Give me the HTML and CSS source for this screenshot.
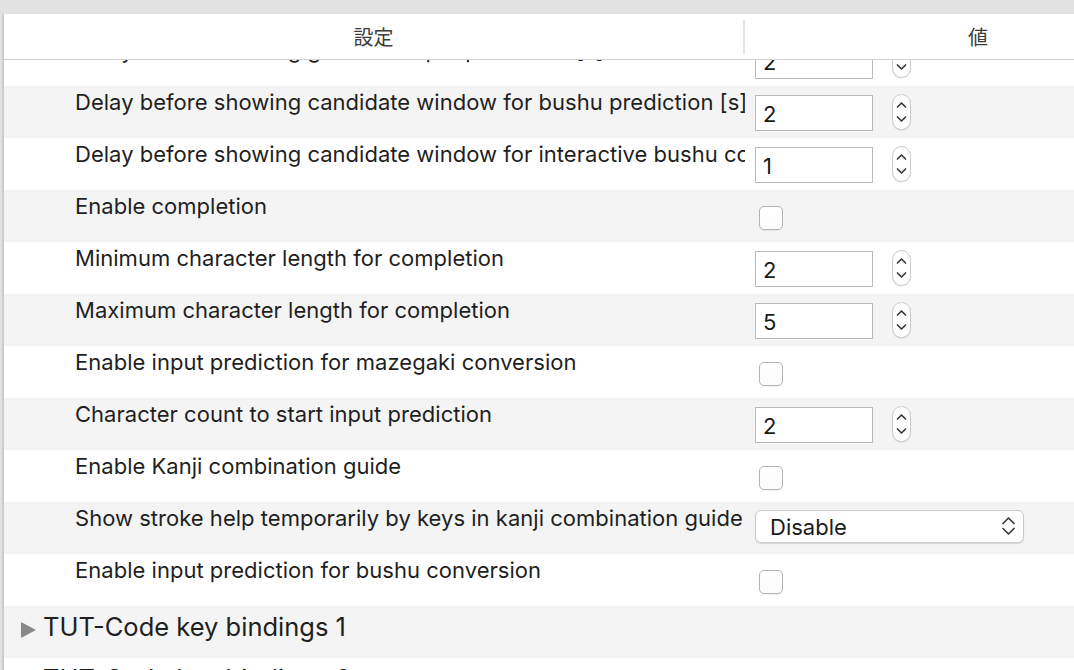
FILE: index.html
```html
<!DOCTYPE html>
<html lang="en">
<head>
<meta charset="utf-8">
<title>Settings</title>
<link rel="stylesheet" href="styles.css">
</head>
<body>
<div class="window">
  <div class="table">
    <div class="header">
      <div class="hcell hname">設定</div>
      <div class="hsep"></div>
      <div class="hcell hvalue">値</div>
    </div>
    <div class="body">
      <div class="rows">
        <div class="row">
          <div class="label">Delay before showing guide for input prediction [s]</div>
          <div class="value"><span class="field">2</span><span class="stepper"><svg width="19" height="36" viewBox="0 0 19 36"><path d="M5.5 13 L9.5 9 L13.5 13 M5.5 23 L9.5 27 L13.5 23"/></svg></span></div>
        </div>
        <div class="row">
          <div class="label">Delay before showing candidate window for bushu prediction [s]</div>
          <div class="value"><span class="field">2</span><span class="stepper"><svg width="19" height="36" viewBox="0 0 19 36"><path d="M5.5 13 L9.5 9 L13.5 13 M5.5 23 L9.5 27 L13.5 23"/></svg></span></div>
        </div>
        <div class="row">
          <div class="label">Delay before showing candidate window for interactive bushu conversion [s]</div>
          <div class="value"><span class="field">1</span><span class="stepper"><svg width="19" height="36" viewBox="0 0 19 36"><path d="M5.5 13 L9.5 9 L13.5 13 M5.5 23 L9.5 27 L13.5 23"/></svg></span></div>
        </div>
        <div class="row">
          <div class="label">Enable completion</div>
          <div class="value"><span class="check"></span></div>
        </div>
        <div class="row">
          <div class="label">Minimum character length for completion</div>
          <div class="value"><span class="field">2</span><span class="stepper"><svg width="19" height="36" viewBox="0 0 19 36"><path d="M5.5 13 L9.5 9 L13.5 13 M5.5 23 L9.5 27 L13.5 23"/></svg></span></div>
        </div>
        <div class="row">
          <div class="label">Maximum character length for completion</div>
          <div class="value"><span class="field">5</span><span class="stepper"><svg width="19" height="36" viewBox="0 0 19 36"><path d="M5.5 13 L9.5 9 L13.5 13 M5.5 23 L9.5 27 L13.5 23"/></svg></span></div>
        </div>
        <div class="row">
          <div class="label">Enable input prediction for mazegaki conversion</div>
          <div class="value"><span class="check"></span></div>
        </div>
        <div class="row">
          <div class="label">Character count to start input prediction</div>
          <div class="value"><span class="field">2</span><span class="stepper"><svg width="19" height="36" viewBox="0 0 19 36"><path d="M5.5 13 L9.5 9 L13.5 13 M5.5 23 L9.5 27 L13.5 23"/></svg></span></div>
        </div>
        <div class="row">
          <div class="label">Enable Kanji combination guide</div>
          <div class="value"><span class="check"></span></div>
        </div>
        <div class="row">
          <div class="label">Show stroke help temporarily by keys in kanji combination guide</div>
          <div class="value"><span class="select"><span class="select-text">Disable</span><svg width="16" height="20" viewBox="0 0 16 20"><path d="M2 6.5 L7.5 1 L13 6.5 M2 11.5 L7.5 17 L13 11.5"/></svg></span></div>
        </div>
        <div class="row">
          <div class="label">Enable input prediction for bushu conversion</div>
          <div class="value"><span class="check"></span></div>
        </div>
        <div class="row group">
          <span class="disclosure"></span><span class="group-title">TUT-Code key bindings 1</span>
        </div>
        <div class="row group">
          <span class="disclosure"></span><span class="group-title">TUT-Code key bindings 2</span>
        </div>
      </div>
    </div>
  </div>
</div>
</body>
</html>
```

FILE: styles.css
```css
html, body {
  margin: 0;
  padding: 0;
  width: 1074px;
  height: 670px;
  overflow: hidden;
  background: #e2e2e2;
}

.window {
  padding-top: 14px;
  padding-left: 2px;
  height: 656px;
}

.table {
  height: 656px;
  background: #ffffff;
  border-left: 2px solid #cdcdcd;
  display: flex;
  flex-direction: column;
  font-family: "Inter", "Noto Sans", sans-serif;
  color: #1f1f1f;
  overflow: hidden;
}

.header {
  flex: none;
  height: 45px;
  border-bottom: 1px solid #d4d4d4;
  display: flex;
  align-items: center;
  background: #ffffff;
  overflow: hidden;
}

.hcell {
  flex: none;
  font-family: "Noto Sans CJK JP", "Noto Sans", sans-serif;
  font-size: 20px;
  color: #3c3c3c;
  text-align: center;
}

.hname {
  width: 739px;
}

.hsep {
  flex: none;
  width: 2px;
  height: 34px;
  background: #e4e4e4;
}

.hvalue {
  width: 466px;
}

.body {
  flex: 1;
  overflow: hidden;
}

.rows {
  margin-top: -26px;
}

.row {
  height: 52px;
  display: flex;
  align-items: flex-start;
  background: #ffffff;
}

.row:nth-child(even) {
  background: #f4f4f4;
}

.label {
  flex: none;
  width: 667px;
  padding-left: 71px;
  padding-right: 3px;
  padding-top: 3px;
  font-size: 22px;
  letter-spacing: 0.02px;
  line-height: 26px;
  white-space: nowrap;
  overflow: hidden;
}

.value {
  padding-left: 10px;
  display: flex;
  align-items: flex-start;
}

.field {
  margin-top: 9px;
  width: 118px;
  height: 36px;
  box-sizing: border-box;
  border: 1px solid #bababa;
  background: #ffffff;
  padding-left: 7px;
  font-size: 22px;
  line-height: 36px;
  color: #1a1a1a;
}

.stepper {
  margin-top: 8px;
  margin-left: 19px;
  width: 19px;
  height: 36px;
  box-sizing: border-box;
  border: 1px solid #cbcbcb;
  border-radius: 10px;
  background: #ffffff;
  box-shadow: 0 1px 1px rgba(0, 0, 0, 0.08);
  display: flex;
}

.stepper svg {
  margin: -1px;
}

.stepper path,
.select path {
  fill: none;
  stroke: #3a3a3a;
  stroke-width: 1.7;
  stroke-linecap: round;
  stroke-linejoin: round;
}

.check {
  margin-top: 16px;
  margin-left: 4px;
  width: 24px;
  height: 24px;
  box-sizing: border-box;
  border: 1px solid #b4b4b4;
  border-radius: 5px;
  background: linear-gradient(#ffffff, #fbfbfb);
  box-shadow: 0 0.5px 1px rgba(0, 0, 0, 0.06);
}

.select {
  margin-top: 8px;
  width: 269px;
  height: 33px;
  box-sizing: border-box;
  border: 1px solid #cacaca;
  border-radius: 6px;
  background: #ffffff;
  box-shadow: 0 1px 1px rgba(0, 0, 0, 0.12);
  display: flex;
  align-items: center;
  justify-content: space-between;
  padding-left: 14px;
  padding-right: 6px;
}

.select-text {
  font-size: 22px;
  color: #1a1a1a;
}

.group {
  align-items: flex-start;
}

.disclosure {
  flex: none;
  margin-top: 16px;
  margin-left: 17px;
  width: 0;
  height: 0;
  border-top: 8.5px solid transparent;
  border-bottom: 8.5px solid transparent;
  border-left: 15px solid #888888;
}

.group-title {
  margin-left: 7px;
  margin-top: 5px;
  font-size: 25.5px;
  line-height: 32px;
  white-space: nowrap;
  color: #1f1f1f;
}
```
